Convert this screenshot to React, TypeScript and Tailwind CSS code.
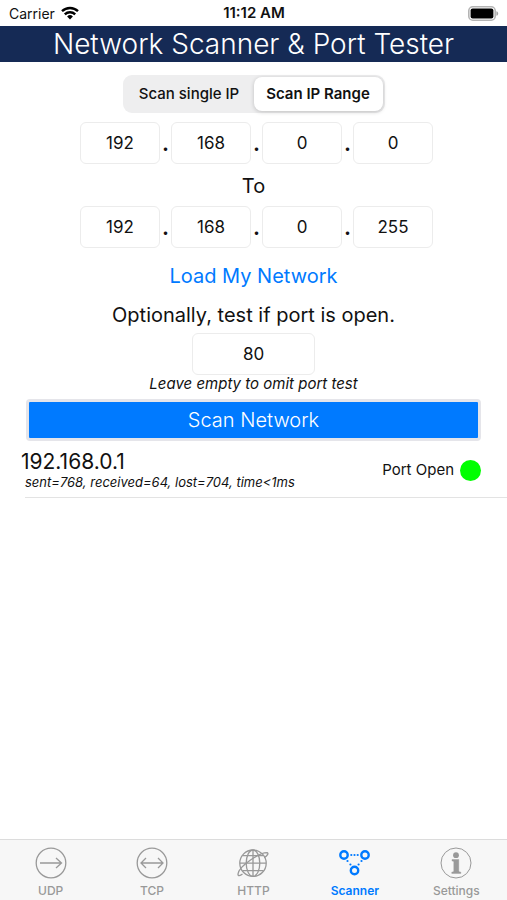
import { useState } from "react";
import clsx from "clsx";

type OctetRowProps = {
  label: string;
  values: string[];
  onChange: (values: string[]) => void;
};

const inputStyle =
  "h-[42px] rounded-md border border-[#ececec] bg-white text-center text-[17px] text-[#111] outline-none focus:border-[#007aff]";

function OctetRow({ label, values, onChange }: OctetRowProps) {
  return (
    <div className="flex justify-center pl-[6px]">
      {values.map((value, i) => (
        <div key={i} className="flex items-center">
          {i > 0 && (
            <span className="w-[11px] text-center text-[22px] leading-[42px] font-semibold">.</span>
          )}
          <input
            type="text"
            inputMode="numeric"
            aria-label={`${label} octet ${i + 1}`}
            value={value}
            onChange={(e) => onChange(values.map((v, j) => (j === i ? e.target.value : v)))}
            className={clsx(inputStyle, "w-20")}
          />
        </div>
      ))}
    </div>
  );
}

function WifiIcon() {
  return (
    <svg viewBox="0 0 18 14" className="h-[14px] w-[18px]" fill="none" stroke="#000" strokeWidth="2.4">
      <path d="M1 5.2a11.6 11.6 0 0 1 16 0" />
      <path d="M3.8 8.3a7.5 7.5 0 0 1 10.4 0" />
      <path d="M9 13.6 6.1 10.5a4.2 4.2 0 0 1 5.8 0Z" fill="#000" stroke="none" />
    </svg>
  );
}

function BatteryIcon() {
  return (
    <svg viewBox="0 0 31 15" className="h-[15px] w-[31px]">
      <rect x="0.8" y="0.8" width="26.4" height="13.4" rx="4" fill="#fff" stroke="#b4b4b4" strokeWidth="1.6" />
      <rect x="2.6" y="2.6" width="22.8" height="9.8" rx="2" fill="#000" />
      <path d="M28.4 5.2c2.4.6 2.4 4 0 4.6Z" fill="#a5a5a5" />
    </svg>
  );
}

function UdpIcon() {
  return (
    <>
      <circle cx="16" cy="16" r="14.8" />
      <path d="M5 16h21M21 11l5.5 5-5.5 5" />
    </>
  );
}

function TcpIcon() {
  return (
    <>
      <circle cx="16" cy="16" r="14.8" />
      <path d="M5.5 16h21M10 11l-5 5 5 5M22 11l5 5-5 5" />
    </>
  );
}

function HttpIcon() {
  return (
    <>
      <circle cx="16" cy="16.2" r="13.2" />
      <ellipse cx="16" cy="16.2" rx="6.8" ry="13.2" />
      <path d="M16 3v26.400M2.800 16.200h26.400M5.500 8.700h21M5.500 23.700h21" />
      <path d="M5.500 27C3 29 .8 29.200 1 27c.3-3.500 6-9.500 12.500-14S26.500 5.800 30 5.700c1.800.2 1 2.600-2.800 5" />
    </>
  );
}

function ScannerIcon() {
  return (
    <>
      <circle cx="5" cy="8" r="3.7" strokeWidth="2.4" />
      <circle cx="26" cy="8" r="3.7" strokeWidth="2.4" />
      <circle cx="15.5" cy="23.5" r="3.7" strokeWidth="2.4" />
      <path
        d="M12.300 8h.01M15.500 8h.01M18.700 8h.01M8.500 14h.01M11.400 17.500h.01M22.500 14h.01M19.600 17.500h.01"
        strokeWidth="2.2"
        strokeLinecap="round"
      />
    </>
  );
}

function SettingsIcon() {
  return (
    <>
      <circle cx="16" cy="16" r="15" strokeWidth="1" />
      <circle cx="16" cy="8.2" r="2.9" fill="currentColor" stroke="none" />
      <path
        d="M12 12.5h6.800v11.200c0 .8.700 1.300 2 1.300v1.500h-9V25c1.300 0 2-.5 2-1.300v-8.400c0-.7-.6-1.200-1.800-1.200Z"
        fill="currentColor"
        stroke="currentColor"
        strokeWidth="0.4"
      />
    </>
  );
}

const tabs = [
  { name: "UDP", icon: UdpIcon },
  { name: "TCP", icon: TcpIcon },
  { name: "HTTP", icon: HttpIcon },
  { name: "Scanner", icon: ScannerIcon },
  { name: "Settings", icon: SettingsIcon },
];

const results = [
  { ip: "192.168.0.1", stats: "sent=768, received=64, lost=704, time<1ms", open: true },
];

const modes = ["Scan single IP", "Scan IP Range"];

export default function App() {
  const [mode, setMode] = useState("Scan IP Range");
  const [from, setFrom] = useState(["192", "168", "0", "0"]);
  const [to, setTo] = useState(["192", "168", "0", "255"]);
  const [port, setPort] = useState("80");
  const [tab, setTab] = useState("Scanner");

  return (
    <div className="flex min-h-screen flex-col bg-white font-[Inter,sans-serif] text-[#111]">
      <div className="grid h-[26px] grid-cols-3 items-center pr-2 pl-[9px] text-[14px]">
        <div className="flex items-center gap-1.5">
          <span>Carrier</span>
          <WifiIcon />
        </div>
        <span className="text-center text-[15px] font-semibold whitespace-nowrap">11:12 AM</span>
        <div className="flex justify-end">
          <BatteryIcon />
        </div>
      </div>

      <h1 className="bg-[#152a55] text-center text-[28px] leading-9 font-light whitespace-nowrap text-white">
        Network Scanner &amp; Port Tester
      </h1>

      <main className="flex flex-1 flex-col">
        <div className="mx-auto mt-[13px] flex h-[38px] rounded-[9px] bg-[#eeeeef] p-0.5">
          {modes.map((m) => (
            <button
              key={m}
              type="button"
              aria-pressed={mode === m}
              onClick={() => setMode(m)}
              className={clsx(
                "w-[129px] rounded-lg text-[15px] whitespace-nowrap",
                mode === m ? "bg-white font-semibold shadow-[0_1px_4px_rgba(0,0,0,0.2)]" : "font-medium"
              )}
            >
              {m}
            </button>
          ))}
        </div>

        <div className="mt-[9px]">
          <OctetRow label="From" values={from} onChange={setFrom} />
          <p className="pt-0.5 text-center text-[20px] leading-10">To</p>
          <OctetRow label="To" values={to} onChange={setTo} />
        </div>

        <button type="button" className="mx-auto mt-3 text-[20px] leading-8 text-[#007aff]">
          Load My Network
        </button>

        <label htmlFor="port" className="mt-[7px] text-center text-[20px] leading-8">
          Optionally, test if port is open.
        </label>
        <input
          id="port"
          type="text"
          inputMode="numeric"
          value={port}
          onChange={(e) => setPort(e.target.value)}
          className={clsx(inputStyle, "mx-auto mt-0.5 w-[123px]")}
        />
        <p className="text-center text-[15px] leading-[18px] italic">Leave empty to omit port test</p>

        <button
          type="button"
          className="mx-[26px] mt-1.5 rounded border-3 border-[#e5e5ea] bg-[#007aff] text-[20px] leading-9 font-light text-white"
        >
          Scan Network
        </button>

        <ul className="mt-2">
          {results.map((r) => (
            <li key={r.ip} className="ml-[25px] flex items-center justify-between border-b border-[#e3e3e3] pt-px pr-[26px] pb-[7px]">
              <div>
                <p className="-ml-1 text-[21px] leading-6">{r.ip}</p>
                <p className="text-[13px] leading-4 italic">{r.stats}</p>
              </div>
              <div className="flex items-center gap-1.5 text-[15px]">
                <span>{r.open ? "Port Open" : "Port Closed"}</span>
                <span className={clsx("size-[21px] rounded-full", r.open ? "bg-[#00ff00]" : "bg-[#ff0000]")} />
              </div>
            </li>
          ))}
        </ul>
      </main>

      <nav className="grid h-[61px] grid-cols-5 border-t border-[#dcdcdc] bg-[#f7f7f7]">
        {tabs.map(({ name, icon: Icon }) => (
          <button
            key={name}
            type="button"
            onClick={() => setTab(name)}
            className={clsx(
              "flex flex-col items-center justify-start pt-[7px] text-[12px] leading-4",
              tab === name ? "font-semibold text-[#007aff]" : "font-medium text-[#999]"
            )}
          >
            <svg viewBox="0 0 32 32" className="mb-1 size-8" fill="none" stroke="currentColor" strokeWidth="1.3">
              <Icon />
            </svg>
            {name}
          </button>
        ))}
      </nav>
    </div>
  );
}
